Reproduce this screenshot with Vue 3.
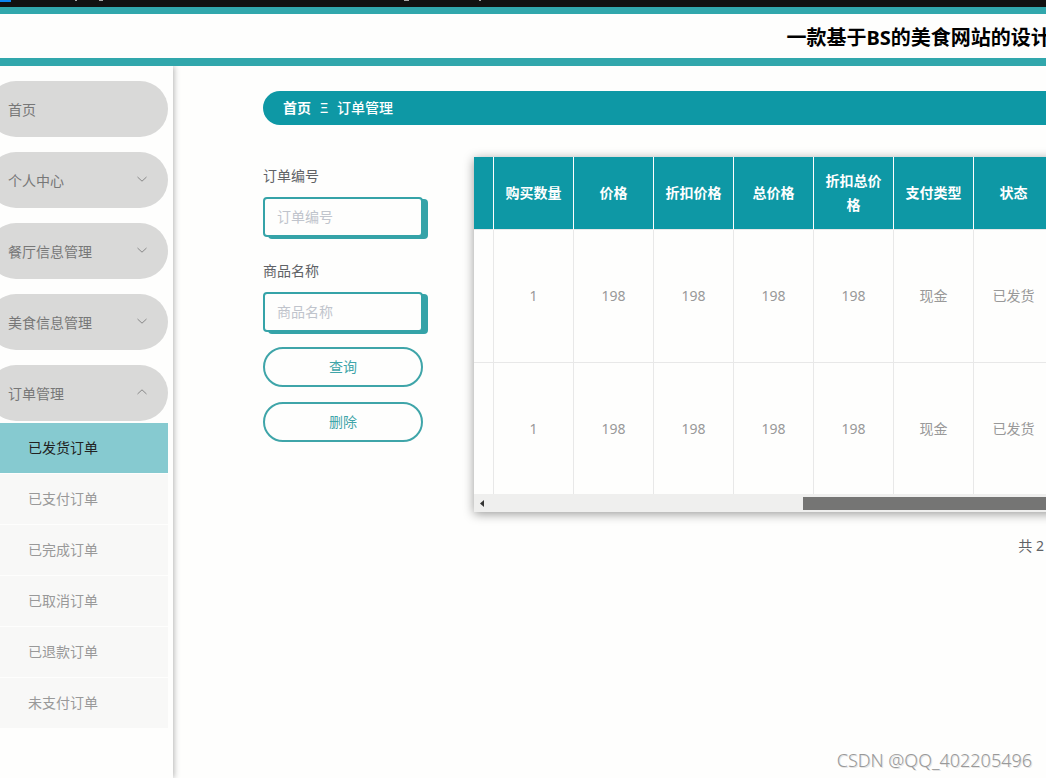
<script setup>
import { ref } from 'vue'

const menus = [
  { name: '个人中心', open: false },
  { name: '餐厅信息管理', open: false },
  { name: '美食信息管理', open: false },
  { name: '订单管理', open: true },
]
const orders = ['已发货订单', '已支付订单', '已完成订单', '已取消订单', '已退款订单', '未支付订单']
const active = ref('已发货订单')

const columns = ['购买数量', '价格', '折扣价格', '总价格', '折扣总价格', '支付类型', '状态']
const rows = [
  ['1', '198', '198', '198', '198', '现金', '已发货'],
  ['1', '198', '198', '198', '198', '现金', '已发货'],
]
const orderNo = ref('')
const goodsName = ref('')
</script>

<template>
  <div class="page">
    <div class="strip">
      <svg width="500" height="7" viewBox="0 0 500 7" aria-hidden="true">
        <rect x="0" y="0" width="11" height="2" fill="#0a84f0" />
        <path d="M75 0h2v1h-2zM99 0h4v1h-4zM404 0h5v1h-5zM479 0h2v1h-2z" fill="#aaa" />
      </svg>
    </div>
    <header class="header">
      <h1 class="title">一款基于BS的美食网站的设计</h1>
    </header>
    <div class="body">
      <nav class="sidebar">
        <div class="menu">
          <a class="pill" href="#">首页</a>
          <button v-for="m in menus" :key="m.name" class="pill" type="button" :aria-expanded="m.open">
            <span>{{ m.name }}</span>
            <svg class="chevron" width="12" height="12" viewBox="0 0 12 12" aria-hidden="true">
              <path :d="m.open ? 'M1.5 8L6 3.8L10.500 8' : 'M1.5 4L6 8.200L10.500 4'" />
            </svg>
          </button>
        </div>
        <div class="submenu">
          <a
            v-for="o in orders"
            :key="o"
            href="#"
            class="sub"
            :class="{ active: o === active }"
            @click.prevent="active = o"
          >{{ o }}</a>
        </div>
      </nav>

      <main class="main">
        <div class="crumbs">
          <a href="#" class="home">首页</a>
          <span class="sep">Ξ</span>
          <span>订单管理</span>
        </div>
        <div class="content">
          <form class="form" @submit.prevent>
            <div class="field">
              <label for="order-no">订单编号</label>
              <input id="order-no" v-model="orderNo" type="text" placeholder="订单编号" />
            </div>
            <div class="field">
              <label for="goods-name">商品名称</label>
              <input id="goods-name" v-model="goodsName" type="text" placeholder="商品名称" />
            </div>
            <button class="action" type="submit">查询</button>
            <button class="action" type="button">删除</button>
          </form>

          <section class="result">
            <div class="card">
              <div class="viewport">
                <table>
                  <colgroup>
                    <col class="lead" />
                    <col v-for="c in columns" :key="c" class="cell" />
                  </colgroup>
                  <thead>
                    <tr>
                      <th></th>
                      <th v-for="c in columns" :key="c" scope="col">{{ c }}</th>
                    </tr>
                  </thead>
                  <tbody>
                    <tr v-for="(r, i) in rows" :key="i">
                      <td></td>
                      <td v-for="(v, j) in r" :key="j">{{ v }}</td>
                    </tr>
                  </tbody>
                </table>
              </div>
              <div class="scrollbar">
                <svg width="18" height="18" viewBox="0 0 18 18" aria-hidden="true">
                  <path d="M6 9.500L10 6V13Z" fill="#333" />
                </svg>
                <div class="thumb"></div>
              </div>
            </div>
            <div class="total">共 2</div>
          </section>
        </div>
      </main>
    </div>
    <div class="watermark">CSDN @QQ_402205496</div>
  </div>
</template>

<style>
body {
  margin: 0;
  background: #fefefd;
}
</style>

<style scoped>
.page {
  position: relative;
  display: flex;
  flex-direction: column;
  min-height: 100vh;
  overflow: hidden;
  background: #fefefd;
  color: #606266;
  font-family: "Noto Sans", "Noto Sans CJK SC", sans-serif;
  font-size: 14px;
}
.page * {
  box-sizing: border-box;
}
a {
  color: inherit;
  text-decoration: none;
}
button,
input {
  font: inherit;
}
.strip {
  height: 7px;
  background: #111;
}
.strip svg {
  display: block;
}
.header {
  padding-top: 4px;
  border-top: 7px solid #31a7ac;
  border-bottom: 8px solid #31a7ac;
}
.title {
  margin: 0 0 0 75%;
  padding-left: 2px;
  font-size: 20px;
  font-weight: 700;
  line-height: 40px;
  white-space: nowrap;
  color: #000;
}
.body {
  flex: 1;
  display: flex;
}
.sidebar {
  flex: none;
  width: 173px;
  padding: 15px 5px 0 0;
  box-shadow: 1px 0 6px rgba(0, 0, 0, 0.3);
  clip-path: inset(0 -10px 0 0);
}
.menu {
  display: flex;
  flex-direction: column;
  gap: 15px;
  margin-left: -12px;
}
.pill {
  display: flex;
  align-items: center;
  justify-content: space-between;
  height: 56px;
  padding: 0 20px;
  border: 0;
  border-radius: 28px;
  background: #d9d9d8;
  color: #777;
}
.chevron {
  margin-bottom: 2px;
  fill: none;
  stroke: #888;
  stroke-width: 1;
}
.submenu {
  display: flex;
  flex-direction: column;
  gap: 1px;
  margin-top: 2px;
}
.sub {
  padding-left: 28px;
  line-height: 50px;
  background: #f8f8f7;
  color: #999;
}
.sub.active {
  background: #86cad0;
  color: #222;
}
.main {
  flex: 1;
  min-width: 0;
  padding: 25px 0 0 90px;
}
.crumbs {
  display: flex;
  height: 34px;
  padding-left: 20px;
  border-radius: 17px 0 0 17px;
  background: #0e98a5;
  color: #fff;
  font-weight: 500;
  line-height: 34px;
}
.home {
  font-weight: 700;
}
.sep {
  width: 26px;
  text-align: center;
  font-weight: 400;
}
.content {
  display: flex;
  gap: 51px;
  margin-top: 32px;
}
.form {
  flex: none;
  display: flex;
  flex-direction: column;
  gap: 15px;
  width: 160px;
}
.field {
  display: flex;
  flex-direction: column;
}
.field label {
  padding-bottom: 2px;
  line-height: 38px;
}
.field input {
  width: 100%;
  height: 40px;
  padding: 0 12px 2px;
  border: 2px solid #35a3a8;
  border-radius: 4px;
  box-shadow: 5px 2px 0 #35a3a8;
  background: #fefefd;
  color: #606266;
  outline: none;
}
.field input::placeholder {
  color: #c0c4cc;
  opacity: 1;
}
.action {
  height: 40px;
  padding: 0 0 2px;
  border: 2px solid #3fa5a9;
  border-radius: 20px;
  background: #fefefd;
  color: #3fa5a9;
}
.result {
  flex: 1;
  min-width: 0;
}
.card {
  margin-right: -20px;
  box-shadow: 0 2px 10px rgba(0, 0, 0, 0.4);
}
.viewport {
  overflow: hidden;
  background: #fefefd;
}
table {
  width: 580px;
  table-layout: fixed;
  border-collapse: separate;
  border-spacing: 0;
}
.lead {
  width: 20px;
}
.cell {
  width: 80px;
}
th,
td {
  border-right: 1px solid #e8e8e8;
  border-bottom: 1px solid #e8e8e8;
  text-align: center;
  line-height: 24px;
}
th {
  height: 73px;
  padding: 0 10px;
  border-right-color: #fefefd;
  background: #0e98a5;
  color: #fff;
  font-weight: 700;
}
td {
  height: 133px;
  padding: 0;
  color: #999;
}
tbody tr:last-child td {
  height: 131px;
  border-bottom: 0;
}
.scrollbar {
  display: flex;
  align-items: center;
  height: 18px;
  background: #efefee;
}
.thumb {
  flex: 1;
  height: 13px;
  margin-left: 311px;
  background: #757574;
}
.total {
  margin-top: 20px;
  padding-right: 2px;
  line-height: 28px;
  text-align: right;
}
.watermark {
  position: absolute;
  right: 14px;
  bottom: 8px;
  font-family: "Noto Sans", sans-serif;
  font-size: 18px;
  font-weight: 300;
  line-height: 20px;
  color: #999;
  text-shadow: 1px 1px 0 #e4e4e4;
}
</style>
